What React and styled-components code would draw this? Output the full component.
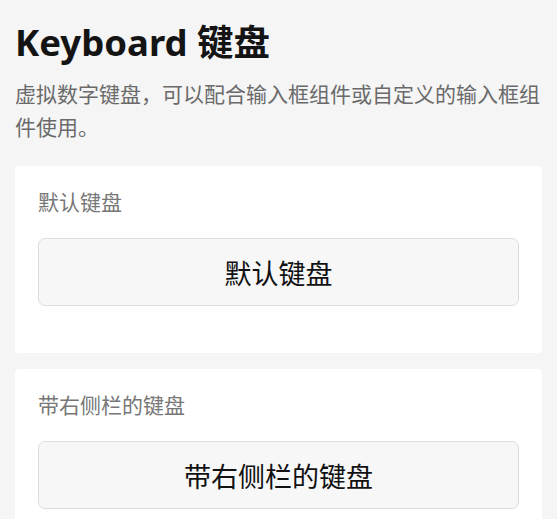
import React from "react";
import styled, { createGlobalStyle } from "styled-components";

const GlobalStyle = createGlobalStyle`
  html, body {
    margin: 0;
    background: #f5f5f5;
  }
  body {
    font-family: "Noto Sans", "Noto Sans CJK SC", sans-serif;
  }
`;

const Page = styled.div`
  padding: 20px 15px 0;
`;

const Title = styled.h1`
  margin: 0;
  font-size: 36.5px;
  line-height: 44px;
  font-weight: 700;
  color: #141414;
`;

const Intro = styled.p`
  margin: 14px 0 22px;
  font-size: 21px;
  line-height: 33px;
  color: #6a6a6a;
`;

const Card = styled.section`
  background: #fff;
  border-radius: 4px;
  padding: 22px 23px 47px;
  margin-bottom: 16px;
`;

const Label = styled.div`
  font-size: 21px;
  line-height: 28px;
  color: #777;
`;

const KeyboardButton = styled.button`
  display: flex;
  align-items: center;
  justify-content: center;
  width: 100%;
  height: 68px;
  margin-top: 22px;
  padding: 0;
  border: 1px solid #dddddd;
  border-radius: 7px;
  background: #f7f7f7;
  font-family: inherit;
  font-size: 27px;
  color: #111;
  cursor: pointer;
`;

const demos = ["默认键盘", "带右侧栏的键盘"];

export default function App() {
  return (
    <>
      <GlobalStyle />
      <Page>
        <Title>Keyboard 键盘</Title>
        <Intro>虚拟数字键盘，可以配合输入框组件或自定义的输入框组件使用。</Intro>
        {demos.map((name) => (
          <Card key={name}>
            <Label>{name}</Label>
            <KeyboardButton type="button">{name}</KeyboardButton>
          </Card>
        ))}
      </Page>
    </>
  );
}
